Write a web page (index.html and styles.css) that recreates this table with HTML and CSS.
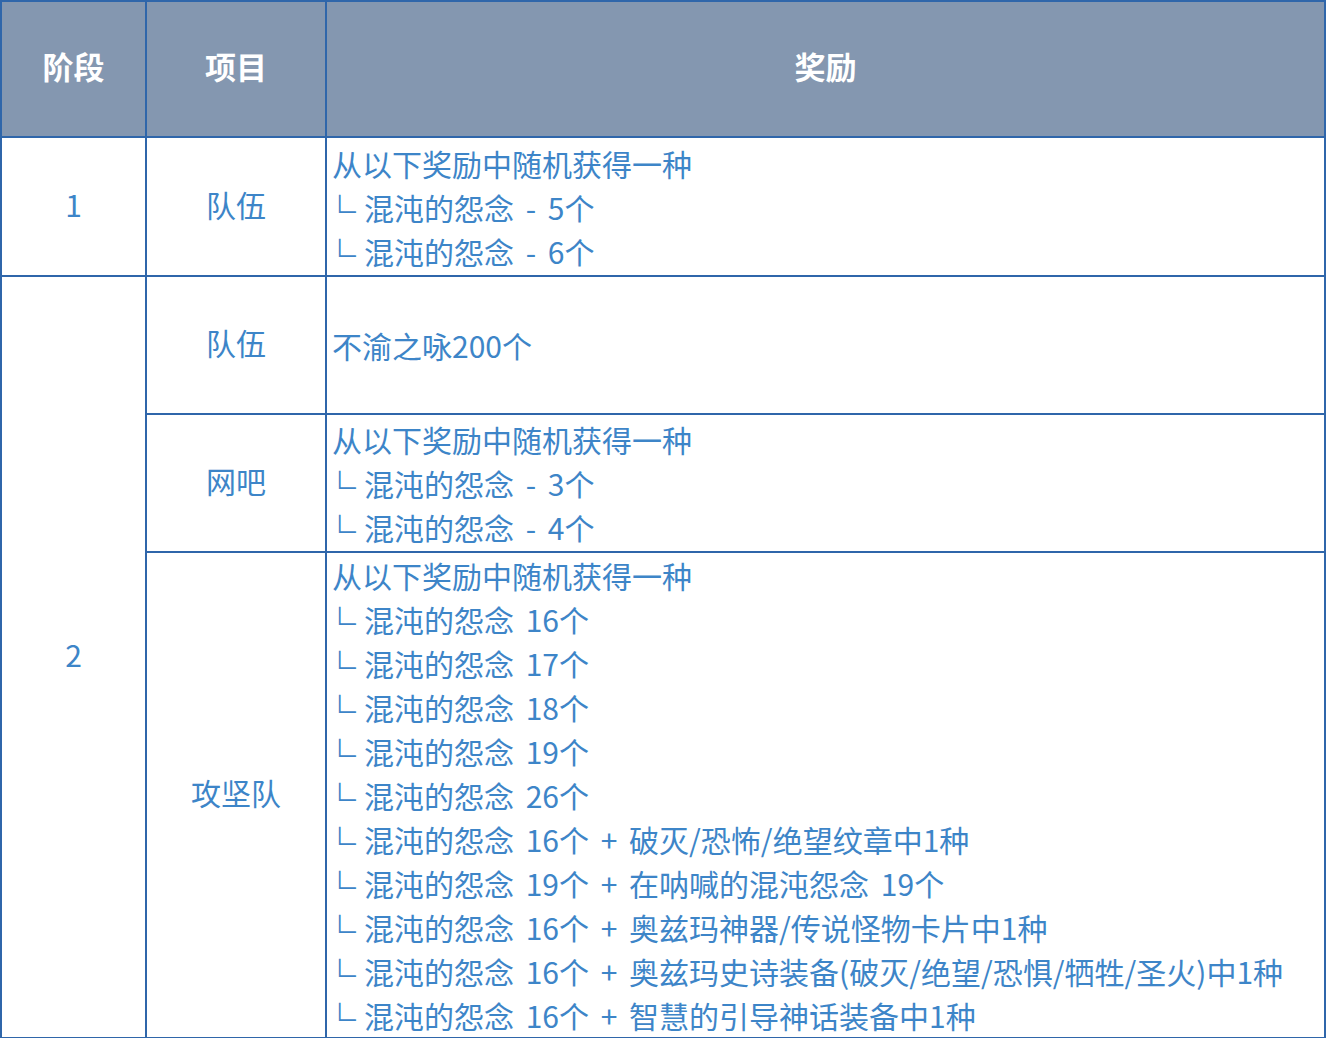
FILE: index.html
```html
<!DOCTYPE html>
<html lang="zh-CN">
<head>
<meta charset="utf-8">
<link rel="stylesheet" href="styles.css">
</head>
<body>
<table class="rewards">
  <colgroup>
    <col class="c-stage">
    <col class="c-item">
    <col class="c-reward">
  </colgroup>
  <thead>
    <tr class="head">
      <th>阶段</th>
      <th>项目</th>
      <th>奖励</th>
    </tr>
  </thead>
  <tbody>
    <tr class="r1">
      <td class="center">1</td>
      <td class="center">队伍</td>
      <td class="reward">
        <div class="line">从以下奖励中随机获得一种</div>
        <div class="line"><span class="mark">∟</span>混沌的怨念 - 5个</div>
        <div class="line"><span class="mark">∟</span>混沌的怨念 - 6个</div>
      </td>
    </tr>
    <tr class="r2">
      <td class="center" rowspan="3">2</td>
      <td class="center">队伍</td>
      <td class="reward"><div class="line">不渝之咏200个</div></td>
    </tr>
    <tr class="r3">
      <td class="center">网吧</td>
      <td class="reward">
        <div class="line">从以下奖励中随机获得一种</div>
        <div class="line"><span class="mark">∟</span>混沌的怨念 - 3个</div>
        <div class="line"><span class="mark">∟</span>混沌的怨念 - 4个</div>
      </td>
    </tr>
    <tr class="r4">
      <td class="center">攻坚队</td>
      <td class="reward">
        <div class="line">从以下奖励中随机获得一种</div>
        <div class="line"><span class="mark">∟</span>混沌的怨念 16个</div>
        <div class="line"><span class="mark">∟</span>混沌的怨念 17个</div>
        <div class="line"><span class="mark">∟</span>混沌的怨念 18个</div>
        <div class="line"><span class="mark">∟</span>混沌的怨念 19个</div>
        <div class="line"><span class="mark">∟</span>混沌的怨念 26个</div>
        <div class="line"><span class="mark">∟</span>混沌的怨念 16个 + 破灭/恐怖/绝望纹章中1种</div>
        <div class="line"><span class="mark">∟</span>混沌的怨念 19个 + 在呐喊的混沌怨念 19个</div>
        <div class="line"><span class="mark">∟</span>混沌的怨念 16个 + 奥兹玛神器/传说怪物卡片中1种</div>
        <div class="line"><span class="mark">∟</span>混沌的怨念 16个 + 奥兹玛史诗装备(破灭/绝望/恐惧/牺牲/圣火)中1种</div>
        <div class="line"><span class="mark">∟</span>混沌的怨念 16个 + 智慧的引导神话装备中1种</div>
      </td>
    </tr>
  </tbody>
</table>
</body>
</html>
```

FILE: styles.css
```css
html, body {
  margin: 0;
  padding: 0;
  background: #ffffff;
}
body {
  width: 1326px;
  height: 1038px;
  overflow: hidden;
}
.rewards {
  width: 1326px;
  border-collapse: collapse;
  table-layout: fixed;
  font-family: "Noto Sans CJK SC", "Noto Sans", sans-serif;
  color: #3d85c8;
}
.c-stage { width: 145px; }
.c-item { width: 180px; }
.rewards th,
.rewards td {
  border: 2px solid #2f66aa;
  padding: 0;
  vertical-align: middle;
}
.head th {
  height: 136px;
  background: #8497b0;
  color: #ffffff;
  font-weight: bold;
  font-size: 31px;
  text-align: center;
  padding-bottom: 8px;
  box-sizing: border-box;
}
.center {
  text-align: center;
  font-size: 30px;
  padding-bottom: 6px !important;
}
.reward {
  padding-left: 5px !important;
  font-size: 30px;
  white-space: nowrap;
  word-spacing: 5px;
}
.line {
  height: 44px;
  line-height: 44px;
}
.mark {
  display: inline-block;
  width: 32px;
  height: 44px;
  line-height: 44px;
  font-size: 24px;
  text-align: left;
  padding-left: 3px;
  box-sizing: border-box;
  vertical-align: top;
  position: relative;
  top: -4px;
  word-spacing: 0;
}
.r1 .reward { height: 137px; }
.r2 .reward { height: 136px; }
.r3 .reward { height: 136px; }
.r4 .reward { height: 484px; }
```
